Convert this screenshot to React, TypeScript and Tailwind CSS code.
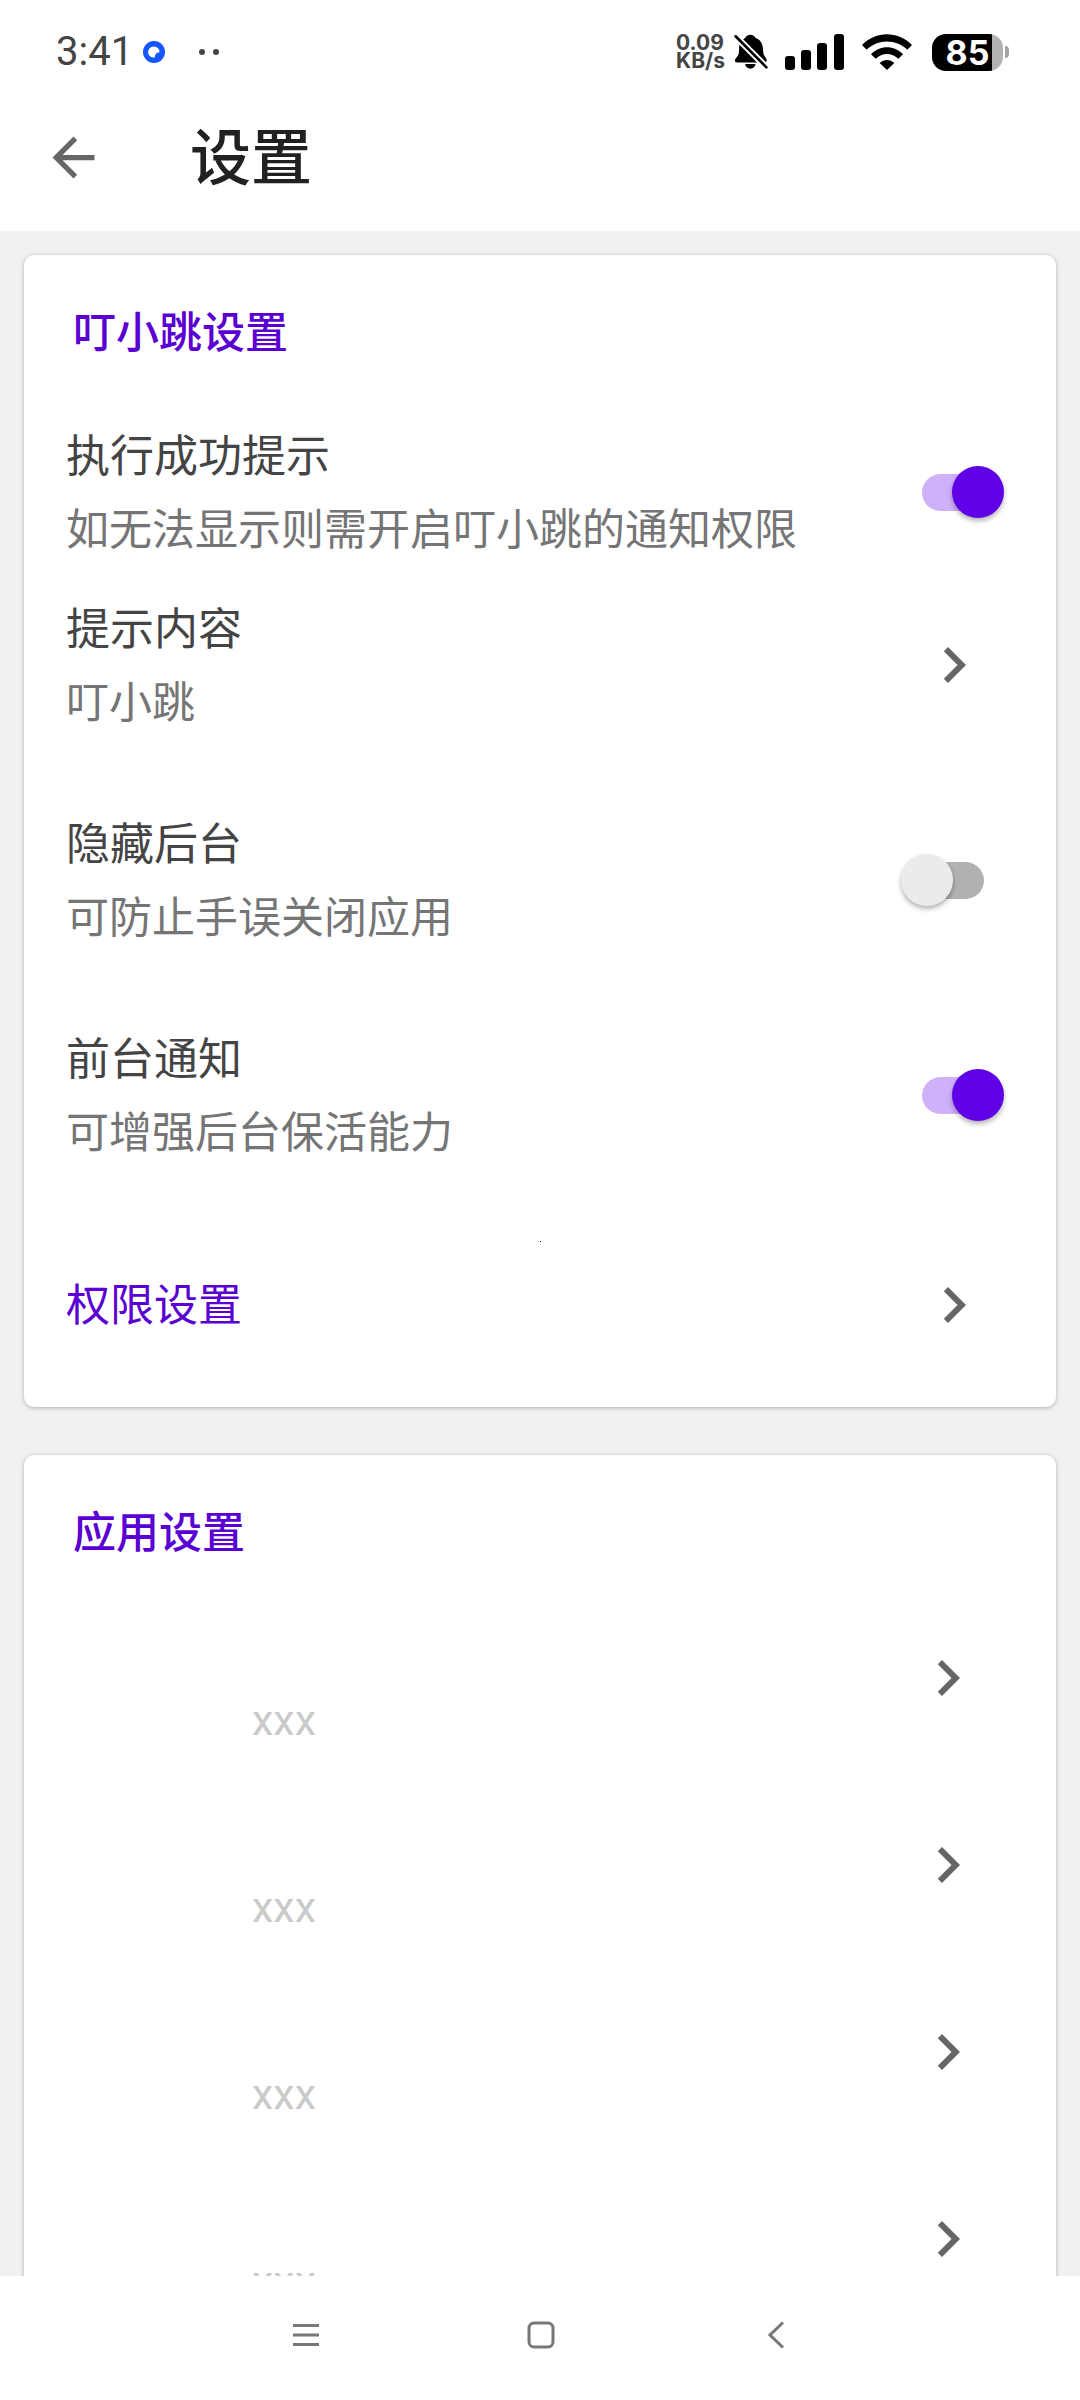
import { useState } from "react";

function BackIcon() {
  return (
    <svg viewBox="0 0 24 24" className="size-[63px] fill-[#666666]" aria-hidden="true">
      <path d="M20 11H7.83l5.59-5.59L12 4l-8 8 8 8 1.41-1.41L7.83 13H20v-2z" />
    </svg>
  );
}

function ChevronIcon() {
  return (
    <svg viewBox="0 0 24 24" className="size-[72px] shrink-0 fill-[#666666]" aria-hidden="true">
      <path d="M10 6 8.59 7.41 13.17 12l-4.58 4.59L10 18l6-6z" />
    </svg>
  );
}

function BellOffIcon() {
  return (
    <svg viewBox="0 0 102 110" className="h-[36px] w-[34px]" aria-hidden="true">
      <path
        d="M49 2c8 0 13 4 16 10 14 5 21 16 22 29l2 19c1 7 10 12 10 20 0 5-3 7-7 7H9c-6 0-8-4-7-8 3-8 11-12 12-22l1-19c1-11 7-20 18-26 3-6 8-10 16-10z"
        fill="#000"
      />
      <path d="M33 92h32c-2 9-8 14-16 14s-14-5-16-14z" fill="#000" />
      <path d="M2 5 102 106" stroke="#fff" strokeWidth="20" />
      <path d="M4 7 98 102" stroke="#000" strokeWidth="8" strokeLinecap="round" />
    </svg>
  );
}

function SignalIcon() {
  return (
    <svg viewBox="0 0 60 36" className="h-[36px] w-[60px]" aria-hidden="true">
      <rect x="0" y="22" width="10" height="14" rx="3" />
      <rect x="16" y="16" width="10" height="20" rx="3" />
      <rect x="32" y="9" width="10" height="27" rx="3" />
      <rect x="49" y="0" width="10" height="36" rx="3" />
    </svg>
  );
}

function WifiIcon() {
  return (
    <svg viewBox="0 0 150 108" className="h-[36px] w-[50px]" aria-hidden="true">
      <path d="M0 33C42-10 108-10 150 33l-14 14C102 14 48 14 14 47z" />
      <path d="M27 61c27-28 69-28 96 0L109 74c-20-19-48-19-68 0z" />
      <path d="M53 87c13-12 31-12 44 0L75 108z" />
    </svg>
  );
}

function StatusBar() {
  return (
    <div className="flex h-[84px] items-center justify-between pt-5 pr-[71px] pl-[56px]">
      <div className="flex items-center text-[40px] leading-[50px] text-[#444444]">
        <span>3:41</span>
        <svg viewBox="0 0 24 24" className="ml-[9px] size-6" aria-hidden="true">
          <circle cx="12" cy="12" r="11" fill="#1456ff" />
          <path d="M12 6.5A5.5 5.5 0 0 1 17.5 12.5 4 4 0 0 0 13 17.3 5.5 5.5 0 1 1 12 6.5z" fill="#fff" />
        </svg>
        <svg viewBox="0 0 20 6" className="ml-[33px] h-[6px] w-5" aria-hidden="true">
          <circle cx="3" cy="3" r="3" fill="#444444" />
          <circle cx="17" cy="3" r="3" fill="#444444" />
        </svg>
      </div>
      <div className="flex items-center">
        <div className="font-['Inter',sans-serif] text-[21px] leading-[18px] font-bold text-[#444444]">
          <div>0.09</div>
          <div>KB/s</div>
        </div>
        <div className="ml-[9px] flex items-center">
          <BellOffIcon />
          <div className="ml-[17px]">
            <SignalIcon />
          </div>
          <div className="ml-[17px]">
            <WifiIcon />
          </div>
          <div className="ml-5 flex items-center gap-[2px]">
            <div className="flex h-[37px] w-[71px] items-center justify-center rounded-[14px] bg-[linear-gradient(90deg,#000_85%,#b3b3b3_85%)] font-['Inter',sans-serif] text-[34px] leading-[37px] font-bold text-white">
              85
            </div>
            <div className="h-[12px] w-[4px] rounded-r-full bg-[#a3a3a3]" />
          </div>
        </div>
      </div>
    </div>
  );
}

type RowProps = {
  title: string;
  detail: string;
};

function RowText({ title, detail }: RowProps) {
  return (
    <span className="flex flex-1 flex-col pt-1 text-left">
      <span className="text-[44px] leading-[73px] text-[#444444]">{title}</span>
      <span className="text-[43px] leading-[73px] text-[#757575]">{detail}</span>
    </span>
  );
}

function SwitchRow({ title, detail, defaultOn }: RowProps & { defaultOn: boolean }) {
  const [on, setOn] = useState(defaultOn);

  return (
    <label className="flex cursor-pointer items-center pr-[52px] pl-[42px]">
      <RowText title={title} detail={detail} />
      <span className="relative flex h-[52px] w-[103px] shrink-0 items-center justify-center">
        <input
          type="checkbox"
          role="switch"
          checked={on}
          onChange={(e) => setOn(e.target.checked)}
          className="peer absolute inset-0 size-full cursor-pointer opacity-0"
        />
        <span className="h-[37px] w-[62px] rounded-full bg-[#b1b1b1] peer-checked:bg-[#cfb1fa]" />
        <span className="pointer-events-none absolute top-0 left-0 size-[52px] rounded-full bg-[#ebebeb] shadow-[0_3px_5px_rgba(0,0,0,0.3)] transition-all peer-checked:left-[51px] peer-checked:bg-[#5f00e6]" />
      </span>
    </label>
  );
}

function LinkRow({ title, detail }: RowProps) {
  return (
    <button type="button" className="flex w-full items-center pr-[66px] pl-[42px]">
      <RowText title={title} detail={detail} />
      <ChevronIcon />
    </button>
  );
}

function Card({ title, children }: { title: string; children: React.ReactNode }) {
  return (
    <section className="flex flex-col rounded-[10px] bg-white pt-[42px] shadow-[0_1px_4px_rgba(0,0,0,0.28)]">
      <h2 className="pl-[49px] text-[43px] leading-[73px] font-medium text-[#5a00d2]">{title}</h2>
      {children}
    </section>
  );
}

export default function App() {
  const apps = ["xxx", "xxx", "xxx", "xxx"];

  return (
    <div className="flex h-screen flex-col bg-[#f1f1f1] font-['Roboto','Noto_Sans_CJK_SC',sans-serif]">
      <header className="shrink-0 bg-white">
        <StatusBar />
        <div className="flex h-[147px] items-center gap-[85px] pl-[42px]">
          <button type="button" aria-label="返回">
            <BackIcon />
          </button>
          <h1 className="pt-[2px] text-[61px] leading-[84px] font-medium text-[#212121]">设置</h1>
        </div>
      </header>

      <main className="flex min-h-0 flex-1 flex-col gap-12 overflow-y-auto p-6 [scrollbar-width:none]">
        <Card title="叮小跳设置">
          <div className="mt-[47px] flex flex-col gap-[23px]">
            <SwitchRow title="执行成功提示" detail="如无法显示则需开启叮小跳的通知权限" defaultOn={true} />
            <LinkRow title="提示内容" detail="叮小跳" />
          </div>
          <div className="mt-[65px] flex flex-col gap-[65px]">
            <SwitchRow title="隐藏后台" detail="可防止手误关闭应用" defaultOn={false} />
            <SwitchRow title="前台通知" detail="可增强后台保活能力" defaultOn={true} />
          </div>
          <div className="mx-auto mt-[71px] size-px bg-black" />
          <button type="button" className="mt-[26px] mb-[66px] flex h-[73px] items-center pr-[66px] pl-[42px]">
            <span className="flex-1 pt-1 text-left text-[44px] leading-[73px] text-[#5a00d2]">权限设置</span>
            <ChevronIcon />
          </button>
        </Card>

        <Card title="应用设置">
          <div className="mt-[14px]">
            {apps.map((name, i) => (
              <button
                key={i}
                type="button"
                className="flex h-[187px] w-full items-center pr-[72px] pl-[228px]"
              >
                <span className="flex h-full flex-1 items-end pb-[14px] text-[43px] leading-[73px] text-[#cacaca]">
                  {name}
                </span>
                <ChevronIcon />
              </button>
            ))}
          </div>
        </Card>
      </main>

      <nav className="flex h-[124px] shrink-0 items-center justify-center bg-white pb-[6px] pl-[2px]">
        <button type="button" aria-label="最近任务" className="flex w-[235px] justify-center">
          <svg viewBox="0 0 28 28" className="size-7" stroke="#777777" strokeWidth="3" aria-hidden="true">
            <path d="M1 4.5h26M1 14h26M1 23.5h26" />
          </svg>
        </button>
        <button type="button" aria-label="主页" className="flex w-[235px] justify-center">
          <svg viewBox="0 0 28 28" className="size-7" fill="none" stroke="#777777" strokeWidth="3" aria-hidden="true">
            <rect x="2" y="2" width="24" height="24" rx="5" />
          </svg>
        </button>
        <button type="button" aria-label="后退" className="flex w-[235px] justify-center">
          <svg viewBox="0 0 28 28" className="size-7" fill="none" stroke="#777777" strokeWidth="3" aria-hidden="true">
            <path d="M21 1.5 8 14l13 12.5" />
          </svg>
        </button>
      </nav>
    </div>
  );
}
